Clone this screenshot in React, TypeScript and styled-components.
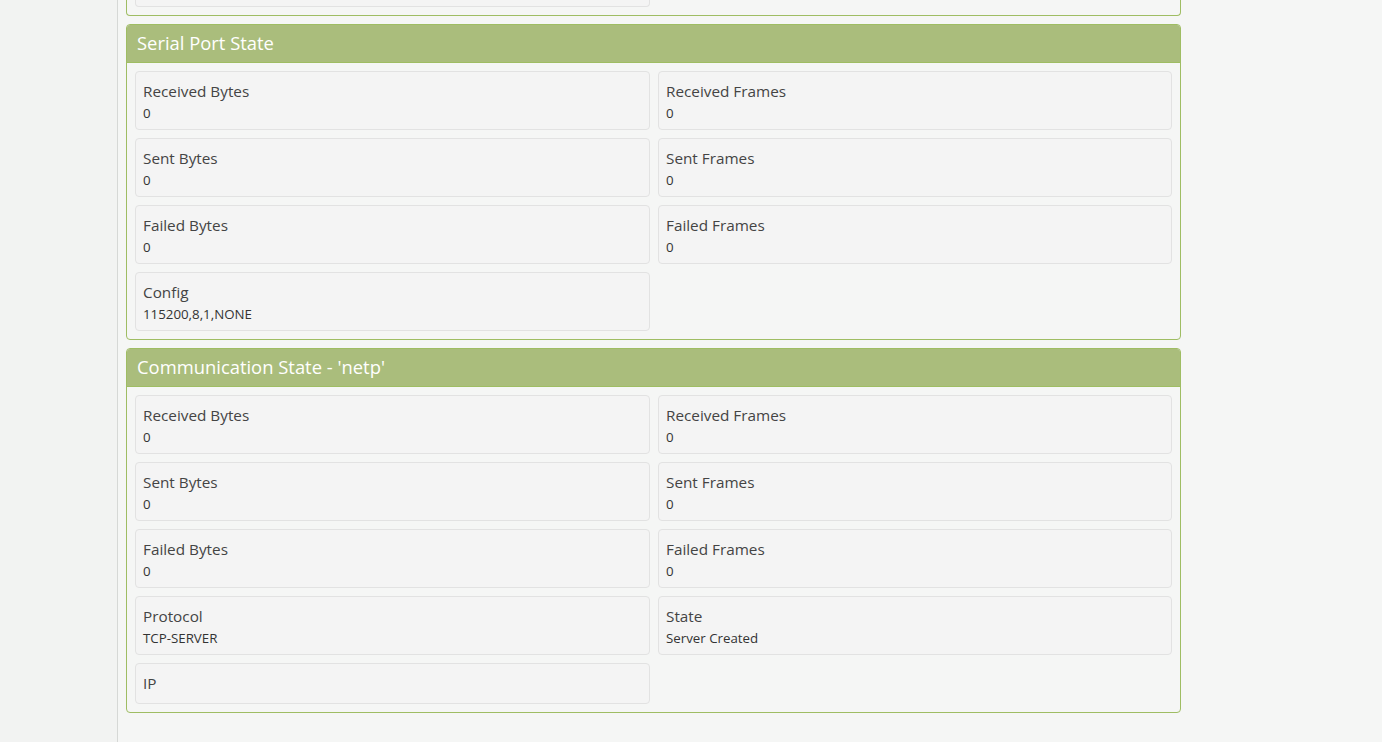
import React from "react";
import styled, { createGlobalStyle } from "styled-components";

const Global = createGlobalStyle`
  html, body { margin: 0; padding: 0; background: #f5f6f5; }
  body { font-family: "Open Sans", "Noto Sans", Arial, sans-serif; color: #444; }
`;

const Page = styled.div`
  display: flex;
  min-height: 742px;
  overflow: hidden;
`;

const Sidebar = styled.div`
  width: 117px;
  flex: none;
  background: #f2f3f2;
  border-right: 1px solid #d6d8d6;
`;

const Main = styled.div`
  width: 1055px;
  margin-left: 8px;
  display: flex;
  flex-direction: column;
  gap: 8px;
`;

const Panel = styled.section<{ $clipped?: boolean }>`
  border: 1px solid #9fbd63;
  border-top: ${(p) => (p.$clipped ? "none" : "1px solid #9fbd63")};
  border-radius: ${(p) => (p.$clipped ? "0 0 4px 4px" : "4px")};
  background: #f5f6f5;
`;

const Header = styled.h3`
  margin: 0;
  height: 38px;
  box-sizing: border-box;
  display: flex;
  align-items: center;
  padding: 0 10px 3px;
  background: #aabd7c;
  color: #fff;
  font-size: 18.4px;
  font-weight: 400;
  border-bottom: 1px solid #9fbd63;
  border-radius: 3px 3px 0 0;
`;

const Body = styled.div<{ $clipped?: boolean }>`
  padding: ${(p) => (p.$clipped ? "0 8px 8px" : "8px")};
  display: grid;
  grid-template-columns: 515px 514px;
  column-gap: 8px;
  row-gap: 8px;
`;

const Card = styled.div`
  background: #f4f4f4;
  border: 1px solid #e2e2e2;
  border-radius: 4px;
  padding: 8px 7px 5px 7px;
  min-height: 41px;
  box-sizing: border-box;
`;

const ClipCard = styled.div`
  height: 7px;
  background: #f4f4f4;
  border: 1px solid #e2e2e2;
  border-top: none;
  border-radius: 0 0 4px 4px;
  box-sizing: border-box;
`;

const Label = styled.div`
  font-size: 15.3px;
  line-height: 22px;
  color: #444;
`;

const Value = styled.div`
  font-size: 13.3px;
  line-height: 22px;
  color: #333;
  &:empty { display: none; }
`;

type Item = { label: string; value?: string };

const serial: Item[] = [
  { label: "Received Bytes", value: "0" },
  { label: "Received Frames", value: "0" },
  { label: "Sent Bytes", value: "0" },
  { label: "Sent Frames", value: "0" },
  { label: "Failed Bytes", value: "0" },
  { label: "Failed Frames", value: "0" },
  { label: "Config", value: "115200,8,1,NONE" },
];

const comm: Item[] = [
  { label: "Received Bytes", value: "0" },
  { label: "Received Frames", value: "0" },
  { label: "Sent Bytes", value: "0" },
  { label: "Sent Frames", value: "0" },
  { label: "Failed Bytes", value: "0" },
  { label: "Failed Frames", value: "0" },
  { label: "Protocol", value: "TCP-SERVER" },
  { label: "State", value: "Server Created" },
  { label: "IP", value: "" },
];

const StatePanel = ({ title, items }: { title: string; items: Item[] }) => (
  <Panel>
    <Header>{title}</Header>
    <Body>
      {items.map((it, i) => (
        <Card key={i}>
          <Label>{it.label}</Label>
          <Value>{it.value}</Value>
        </Card>
      ))}
    </Body>
  </Panel>
);

export default function App() {
  return (
    <>
      <Global />
      <Page>
        <Sidebar />
        <Main>
          <Panel $clipped>
            <Body $clipped>
              <ClipCard />
            </Body>
          </Panel>
          <StatePanel title="Serial Port State" items={serial} />
          <StatePanel title="Communication State - 'netp'" items={comm} />
        </Main>
      </Page>
    </>
  );
}
